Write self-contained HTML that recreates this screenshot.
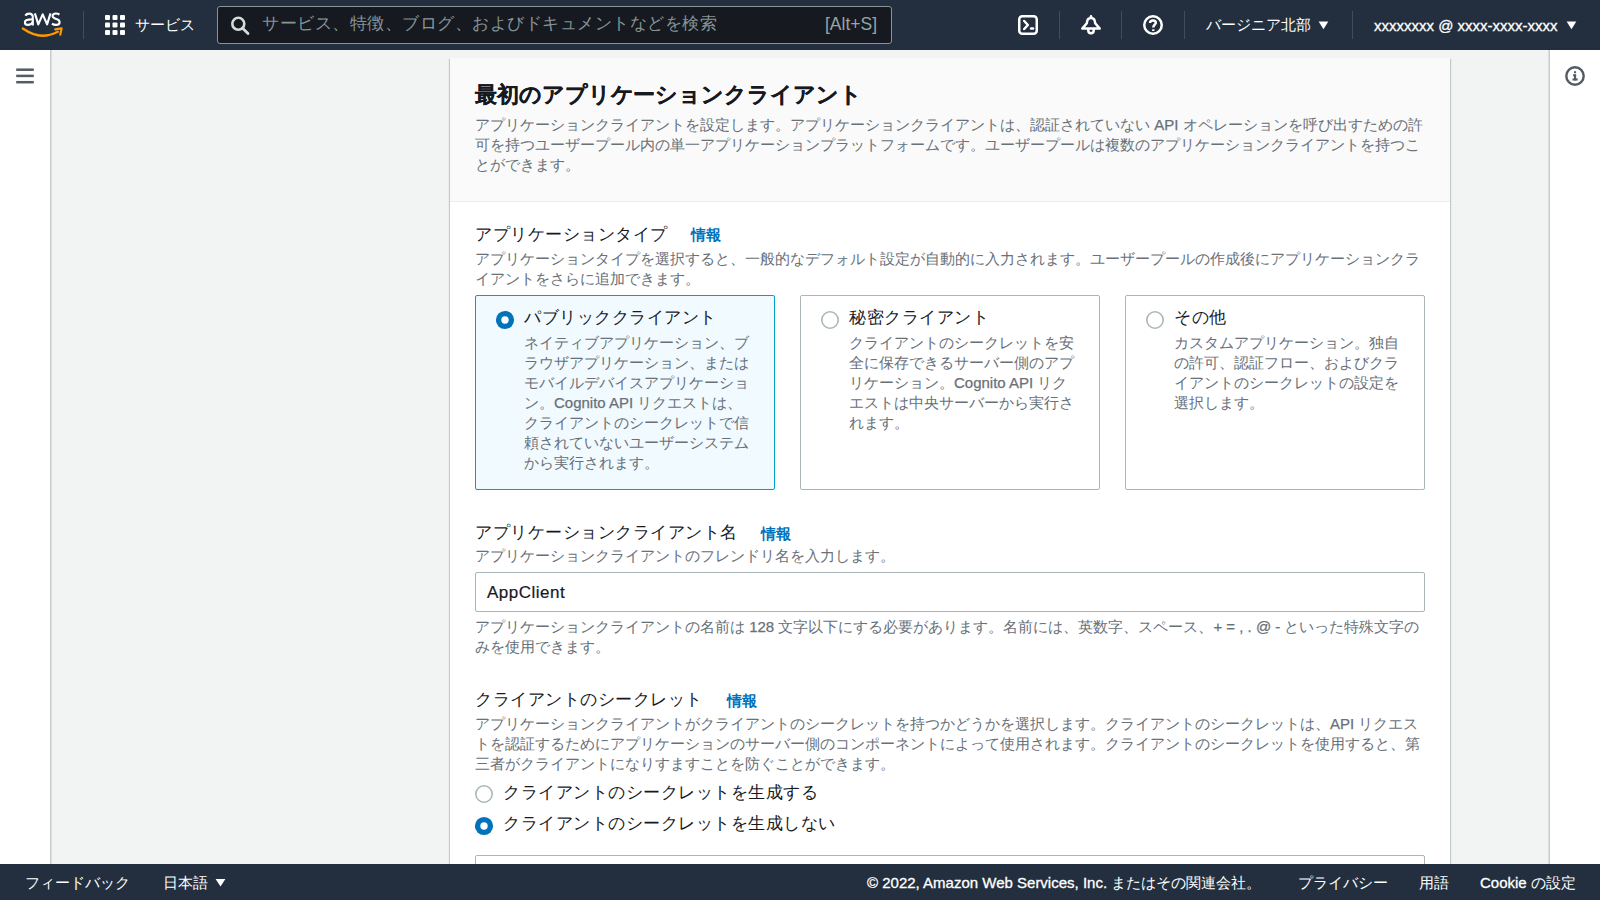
<!DOCTYPE html>
<html lang="ja"><head><meta charset="utf-8">
<style>
*{box-sizing:border-box;margin:0;padding:0}
html,body{width:1600px;height:900px;overflow:hidden}
body{position:relative;background:#f2f3f3;font-family:"Liberation Sans",sans-serif;color:#16191f}
.a{position:absolute;white-space:nowrap}
#hdr{position:absolute;left:0;top:0;width:1600px;height:50px;background:#232f3e}
.sep{position:absolute;top:11px;width:1px;height:28px;background:#414d5c}
.wt{color:#fff;font-size:15px;line-height:20px}
#search{position:absolute;left:217px;top:6px;width:675px;height:38px;background:#16191f;border:1px solid #879596;border-radius:3px}
#nav{position:absolute;left:0;top:50px;width:51px;height:814px;background:#fff;border-right:1px solid #c4cbce;box-shadow:1px 0 1px rgba(0,28,36,.08)}
#rp{position:absolute;left:1549px;top:50px;width:51px;height:814px;background:#fff;border-left:1px solid #c4cbce;box-shadow:-1px 0 1px rgba(0,28,36,.08)}
#card{position:absolute;left:450px;top:58px;width:1000px;height:850px;background:#fff;box-shadow:0 1px 1px 0 rgba(0,28,36,.3),1px 1px 1px 0 rgba(0,28,36,.15),-1px 1px 1px 0 rgba(0,28,36,.15)}
#chead{position:absolute;left:0;top:0;width:1000px;height:144px;background:#fafafa;border-bottom:1px solid #eaeded}
.lbl{font-size:17px;letter-spacing:.5px;line-height:22px;color:#16191f}
.info{font-size:15px;line-height:20px;color:#0073bb;font-weight:bold}
.desc{font-size:15px;line-height:20px;color:#687078}
.lt{-webkit-text-stroke:.25px #687078}
.tile{position:absolute;top:295px;width:300px;height:195px;border:1px solid #aab7b8;border-radius:2px;background:#fff}
.tile.sel{border-color:#00a1c9;background:#f1faff}
.radio{position:absolute;width:18px;height:18px;border-radius:50%;border:2px solid #aab7b8;background:#fff}
.radio.on{border:5.5px solid #0073bb}
#footer{position:absolute;left:0;top:864px;width:1600px;height:36px;background:#232f3e}
</style></head><body>

<div id="nav"></div>
<div id="rp"></div>
<svg class="a" style="left:0;top:50px" width="51" height="50" viewBox="0 50 51 50"><g stroke="#545b64" stroke-width="2.5"><line x1="16.2" y1="69.7" x2="33.8" y2="69.7"/><line x1="16.2" y1="75.9" x2="33.8" y2="75.9"/><line x1="16.2" y1="82.2" x2="33.8" y2="82.2"/></g></svg>
<svg class="a" style="left:1550px;top:50px" width="50" height="50" viewBox="1550 50 50 50"><circle cx="1575" cy="76" r="8.7" fill="none" stroke="#545b64" stroke-width="2.4"/><g fill="#545b64"><rect x="1574" y="71.2" width="2.1" height="2"/><rect x="1573" y="74.4" width="3.1" height="1.9"/><rect x="1574" y="74.4" width="2.1" height="6"/><rect x="1572.5" y="78.4" width="5.2" height="2.1"/></g></svg>

<div id="card">
  <div id="chead"></div>
</div>

<div class="a" style="left:475px;top:81px;font-size:22px;letter-spacing:-.08px;line-height:28px;font-weight:bold;-webkit-text-stroke:.2px #16191f">最初のアプリケーションクライアント</div>
<div class="a desc" style="left:475px;top:115px">アプリケーションクライアントを設定します。アプリケーションクライアントは、認証されていない <span class="lt">API</span> オペレーションを呼び出すための許<br>可を持つユーザープール内の単一アプリケーションプラットフォームです。ユーザープールは複数のアプリケーションクライアントを持つこ<br>とができます。</div>

<div class="a lbl" style="left:475px;top:224px">アプリケーションタイプ</div>
<div class="a info" style="left:690.5px;top:225px">情報</div>
<div class="a desc" style="left:475px;top:249px">アプリケーションタイプを選択すると、一般的なデフォルト設定が自動的に入力されます。ユーザープールの作成後にアプリケーションクラ<br>イアントをさらに追加できます。</div>

<div class="tile sel" style="left:475px"></div>
<div class="tile" style="left:800px"></div>
<div class="tile" style="left:1125px"></div>
<svg class="a" style="left:495px;top:310px" width="20" height="20" viewBox="0 0 20 20"><circle cx="10" cy="10" r="9.1" fill="#0073bb"/><circle cx="10" cy="10" r="3.7" fill="#fff"/></svg>
<svg class="a" style="left:820px;top:310px" width="20" height="20" viewBox="0 0 20 20"><circle cx="10" cy="10" r="8.2" fill="#fff" stroke="#aab7b8" stroke-width="1.6"/></svg>
<svg class="a" style="left:1145px;top:310px" width="20" height="20" viewBox="0 0 20 20"><circle cx="10" cy="10" r="8.2" fill="#fff" stroke="#aab7b8" stroke-width="1.6"/></svg>
<div class="a lbl" style="left:524px;top:307px">パブリッククライアント</div>
<div class="a desc" style="left:524px;top:333px">ネイティブアプリケーション、ブ<br>ラウザアプリケーション、または<br>モバイルデバイスアプリケーショ<br>ン。<span class="lt">Cognito API</span> リクエストは、<br>クライアントのシークレットで信<br>頼されていないユーザーシステム<br>から実行されます。</div>
<div class="a lbl" style="left:849px;top:307px">秘密クライアント</div>
<div class="a desc" style="left:849px;top:333px">クライアントのシークレットを安<br>全に保存できるサーバー側のアプ<br>リケーション。<span class="lt">Cognito API</span> リク<br>エストは中央サーバーから実行さ<br>れます。</div>
<div class="a lbl" style="left:1174px;top:307px">その他</div>
<div class="a desc" style="left:1174px;top:333px">カスタムアプリケーション。独自<br>の許可、認証フロー、およびクラ<br>イアントのシークレットの設定を<br>選択します。</div>

<div class="a lbl" style="left:475px;top:521.5px">アプリケーションクライアント名</div>
<div class="a info" style="left:760.5px;top:524px">情報</div>
<div class="a desc" style="left:475px;top:546px">アプリケーションクライアントのフレンドリ名を入力します。</div>
<div class="a" style="left:475px;top:572px;width:950px;height:40px;border:1px solid #aab7b8;border-radius:2px;background:#fff"></div>
<div class="a lbl" style="left:487px;top:582px;-webkit-text-stroke:.2px #16191f">AppClient</div>
<div class="a desc" style="left:475px;top:617px">アプリケーションクライアントの名前は <span class="lt">128</span> 文字以下にする必要があります。名前には、英数字、スペース、<span class="lt">+ = , . @ -</span> といった特殊文字の<br>みを使用できます。</div>

<div class="a lbl" style="left:475px;top:689px">クライアントのシークレット</div>
<div class="a info" style="left:726.5px;top:691px">情報</div>
<div class="a desc" style="left:475px;top:714px">アプリケーションクライアントがクライアントのシークレットを持つかどうかを選択します。クライアントのシークレットは、<span class="lt">API</span> リクエス<br>トを認証するためにアプリケーションのサーバー側のコンポーネントによって使用されます。クライアントのシークレットを使用すると、第<br>三者がクライアントになりすますことを防ぐことができます。</div>
<svg class="a" style="left:474px;top:783.5px" width="20" height="20" viewBox="0 0 20 20"><circle cx="10" cy="10" r="8.2" fill="#fff" stroke="#aab7b8" stroke-width="1.6"/></svg>
<svg class="a" style="left:474px;top:816px" width="20" height="20" viewBox="0 0 20 20"><circle cx="10" cy="10" r="9.1" fill="#0073bb"/><circle cx="10" cy="10" r="3.7" fill="#fff"/></svg>
<div class="a lbl" style="left:503px;top:782px">クライアントのシークレットを生成する</div>
<div class="a lbl" style="left:503px;top:813px">クライアントのシークレットを生成しない</div>
<div class="a" style="left:475px;top:855px;width:950px;height:40px;border:1px solid #aab7b8;border-radius:2px;background:#fff"></div>

<div id="hdr">
  <svg class="a" style="left:0;top:0" width="1600" height="50" viewBox="0 0 1600 50">
    <g fill="none" stroke="#fff" stroke-width="2.1">
      <path d="M25.3,15.6 C26.2,14.2 27.6,13.6 29.1,13.6 C31.6,13.6 32.8,14.9 32.8,17.2 L32.8,25.4"/>
      <path d="M32.8,19.3 L28.6,19.6 C26,19.8 24.9,21 24.9,22.4 C24.9,24 26.1,24.9 27.9,24.9 C30.2,24.9 32,23.6 32.8,22"/>
      <path d="M34.9,13.4 L38.3,24.4 L42.7,14.3 L47.1,24.4 L50.5,13.4" stroke-linejoin="round"/>
      <path d="M59.4,14.6 C58.5,13.9 57.3,13.5 55.9,13.5 C53.8,13.5 52.6,14.6 52.6,16.1 C52.6,18.1 54.6,18.6 56.4,19.1 C58.4,19.7 59.6,20.4 59.6,22.2 C59.6,24 58.1,24.9 56,24.9 C54.3,24.9 53,24.4 52,23.6"/>
    </g>
    <path d="M22.8,28.6 C30,33.5 36,35.8 42.5,35.8 C48,35.8 53,34.3 57.8,31.8" fill="none" stroke="#ff9900" stroke-width="2.4" stroke-linecap="round"/>
    <path d="M55.2,29.3 L61.6,28.3 L60.3,34.6" fill="none" stroke="#ff9900" stroke-width="2.2" stroke-linecap="round" stroke-linejoin="round"/>
    <g fill="#fff"><rect x="105" y="15" width="5" height="5" rx="1"/><rect x="112.5" y="15" width="5" height="5" rx="1"/><rect x="120" y="15" width="5" height="5" rx="1"/><rect x="105" y="22.5" width="5" height="5" rx="1"/><rect x="112.5" y="22.5" width="5" height="5" rx="1"/><rect x="120" y="22.5" width="5" height="5" rx="1"/><rect x="105" y="30" width="5" height="5" rx="1"/><rect x="112.5" y="30" width="5" height="5" rx="1"/><rect x="120" y="30" width="5" height="5" rx="1"/></g>
    <g fill="none" stroke="#fff" stroke-width="2.5" stroke-linecap="round" stroke-linejoin="round">
      <rect x="1019.25" y="16.25" width="17.5" height="17.5" rx="3"/>
      <path d="M1024.2,21 L1027.9,25 L1024.2,29"/>
      <path d="M1031,28.6 L1033,28.6"/>
      <path d="M1082.3,28.6 L1099.7,28.6 L1095.2,23.2 C1095,19.5 1094,17.9 1091,17.9 C1088,17.9 1087,19.5 1086.8,23.2 Z"/>
      <path d="M1091,16.3 L1091,17.8"/>
      <path d="M1088.3,29.2 L1088.3,30.6 A2.7,2.7 0 0 0 1093.7,30.6 L1093.7,29.2"/>
      <circle cx="1153" cy="25" r="8.75"/>
      <path d="M1150,23 C1150,21 1151.3,20.4 1153,20.4 C1154.8,20.4 1155.8,21.4 1155.8,22.8 C1155.8,24.6 1153.3,24.9 1153.3,27.6" stroke-linecap="butt"/>
    </g>
    <rect x="1152.1" y="29.3" width="2.4" height="1.7" fill="#fff"/>
    <path d="M1318.6,21.6 L1328.3,21.6 L1323.5,29.2 Z" fill="#fff"/>
    <path d="M1566.6,21.6 L1576.3,21.6 L1571.5,29.2 Z" fill="#fff"/>
  </svg>
  <div class="sep" style="left:83px"></div>
  <div class="a wt" style="left:135px;top:15px">サービス</div>
  <div id="search"></div>
  <svg class="a" style="left:226px;top:10px" width="30" height="30" viewBox="226 10 30 30"><circle cx="238.3" cy="23.8" r="6" fill="none" stroke="#d5dbdb" stroke-width="2.6"/><path d="M242.6,28.2 L248,33.5" stroke="#d5dbdb" stroke-width="2.8" stroke-linecap="round"/></svg>
  <div class="a" style="left:262px;top:13px;font-size:17px;letter-spacing:.5px;line-height:22px;color:#879596">サービス、特徴、ブログ、およびドキュメントなどを検索</div>
  <div class="a" style="left:825px;top:13px;font-size:17.5px;line-height:22px;color:#95a5a6">[Alt+S]</div>
  <div class="sep" style="left:1059px"></div>
  <div class="sep" style="left:1121px"></div>
  <div class="sep" style="left:1184px"></div>
  <div class="a wt" style="left:1206px;top:15px">バージニア北部</div>
  <div class="sep" style="left:1352px"></div>
  <div class="a wt" style="left:1374px;top:16px;-webkit-text-stroke:.3px #fff">xxxxxxxx @ xxxx-xxxx-xxxx</div>
</div>

<div id="footer">
  <div class="a wt" style="left:25px;top:9px">フィードバック</div>
  <div class="a wt" style="left:163px;top:9px">日本語</div>
  <svg class="a" style="left:210px;top:8px" width="20" height="20" viewBox="210 872 20 20"><path d="M215.6,879 L225.4,879 L220.5,886.5 Z" fill="#fff"/></svg>
  <div class="a wt" style="left:867px;top:9px"><span style="-webkit-text-stroke:.3px #fff">© 2022, Amazon Web Services, Inc.</span> またはその関連会社。</div>
  <div class="a wt" style="left:1298px;top:9px">プライバシー</div>
  <div class="a wt" style="left:1419px;top:9px">用語</div>
  <div class="a wt" style="left:1480px;top:9px"><span style="-webkit-text-stroke:.3px #fff">Cookie</span> の設定</div>
</div>
</body></html>
